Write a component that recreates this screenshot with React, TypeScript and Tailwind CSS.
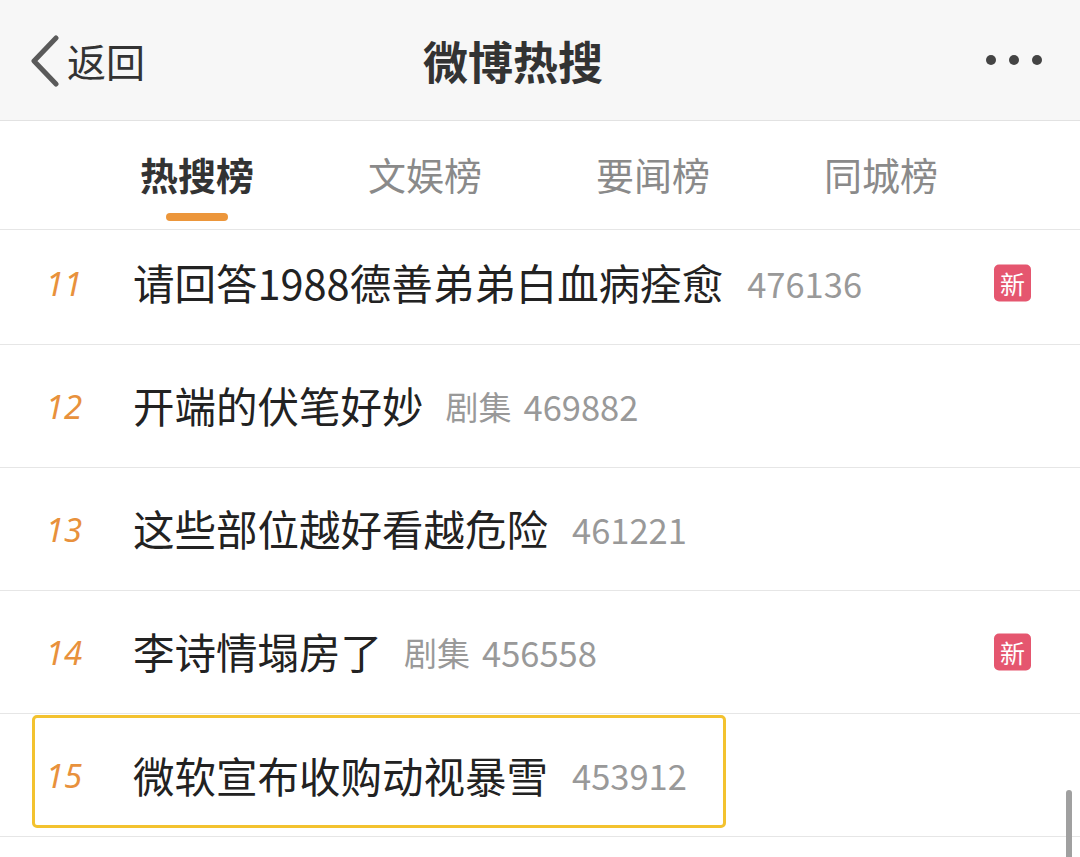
import React from "react";

const rows = [
  { rank: "11", title: "请回答1988德善弟弟白血病痊愈", tag: "", count: "476136", isNew: true },
  { rank: "12", title: "开端的伏笔好妙", tag: "剧集", count: "469882", isNew: false },
  { rank: "13", title: "这些部位越好看越危险", tag: "", count: "461221", isNew: false },
  { rank: "14", title: "李诗情塌房了", tag: "剧集", count: "456558", isNew: true },
  { rank: "15", title: "微软宣布收购动视暴雪", tag: "", count: "453912", isNew: false, hl: true },
];

const font = { fontFamily: '"Noto Sans CJK SC", "Noto Sans", sans-serif' };

function Row({ r }: { r: (typeof rows)[number] }) {
  const content = (
    <div className="flex items-center h-full">
      <div className="w-[100px] shrink-0 flex justify-center pl-[28px]">
        <span
          className="italic text-[33px] text-[#e8913c] leading-none"
          style={{ fontFamily: '"Noto Sans", "DejaVu Sans", sans-serif', fontWeight: 400 }}
        >
          {r.rank}
        </span>
      </div>
      <div className="flex items-center pl-[33px]">
        <span className="text-[41.5px] text-[#222] leading-none">{r.title}</span>
        {r.tag && <span className="ml-[22px] text-[33px] text-[#999] leading-none">{r.tag}</span>}
        <span className={`${r.tag ? "ml-[12px]" : "ml-[24px]"} text-[34.5px] text-[#999] leading-none`}>{r.count}</span>
      </div>
    </div>
  );
  return (
    <div className={`relative h-[123px] border-b border-[#e6e6e6] flex ${r.hl ? "items-start" : "items-center"}`}>
      {r.hl ? (
        <div className="ml-[32px] mt-[1px] w-[694px] h-[113px] border-[3px] border-[#f3c22f] rounded-[5px]">
          <div className="flex items-center h-full -ml-[35px] translate-y-[4px]">{content}</div>
        </div>
      ) : (
        <div className="flex-1 h-full">{content}</div>
      )}
      {r.isNew && (
        <div className="absolute right-[49px] top-1/2 -translate-y-1/2 w-[37px] h-[37px] rounded-[5px] bg-[#e5566f] flex items-center justify-center">
          <span className="text-white text-[25px] leading-none">新</span>
        </div>
      )}
    </div>
  );
}

export default function App() {
  return (
    <div className="w-[1080px] h-[857px] overflow-hidden bg-white relative" style={font}>
      <div className="h-[121px] bg-[#f7f7f7] border-b border-[#e2e2e2] flex items-center relative">
        <div className="flex items-center pl-[30px]">
          <svg width="30" height="52" viewBox="0 0 30 52" className="mt-[2px]">
            <path d="M26 3 L4 26 L26 49" fill="none" stroke="#5a5a5a" strokeWidth="5" strokeLinecap="round" strokeLinejoin="round" />
          </svg>
          <span className="ml-[7px] text-[39px] text-[#333] leading-none">返回</span>
        </div>
        <div className="absolute left-0 right-0 flex justify-center pointer-events-none">
          <span className="text-[45px] font-bold text-[#333] leading-none mr-[54px]">微博热搜</span>
        </div>
        <div className="ml-auto pr-[38px] flex items-center gap-[13px]">
          <span className="w-[10px] h-[10px] rounded-full bg-[#444]" />
          <span className="w-[10px] h-[10px] rounded-full bg-[#444]" />
          <span className="w-[10px] h-[10px] rounded-full bg-[#444]" />
        </div>
      </div>
      <div className="h-[109px] border-b border-[#e6e6e6] flex pl-[83px]">
        {["热搜榜", "文娱榜", "要闻榜", "同城榜"].map((t, i) => (
          <div key={t} className="w-[228px] relative flex justify-center pt-[34px]">
            <span className={`text-[38px] leading-none ${i === 0 ? "font-bold text-[#333]" : "text-[#8a8a8a]"}`}>{t}</span>
            {i === 0 && (
              <span className="absolute top-[92px] left-1/2 -translate-x-1/2 w-[62px] h-[8px] rounded-full bg-[#ec963b]" />
            )}
          </div>
        ))}
      </div>
      <div className="overflow-hidden">
        <div className="-mt-[8px]">
          {rows.map((r) => (
            <Row key={r.rank} r={r} />
          ))}
        </div>
      </div>
      <div className="absolute right-[8px] bottom-0 w-[6px] h-[67px] rounded-t-full bg-[#a0a0a0]" />
    </div>
  );
}
